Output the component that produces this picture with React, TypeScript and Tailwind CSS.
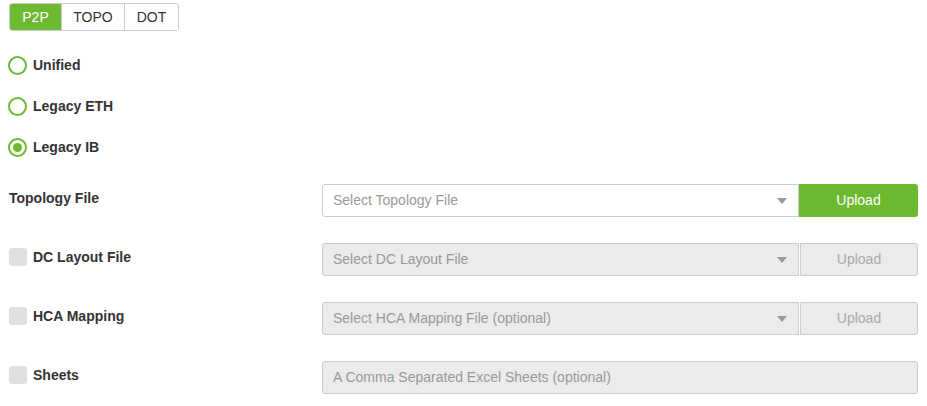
import { useState } from 'react';

type Mode = 'P2P' | 'TOPO' | 'DOT';
type Fabric = 'unified' | 'eth' | 'ib';

const MODES: Mode[] = ['P2P', 'TOPO', 'DOT'];

const FABRICS: { id: Fabric; label: string }[] = [
  { id: 'unified', label: 'Unified' },
  { id: 'eth', label: 'Legacy ETH' },
  { id: 'ib', label: 'Legacy IB' },
];

const Caret = () => (
  <svg width="10" height="6" viewBox="0 0 10 6" className="shrink-0">
    <path d="M0 0 L10 0 L5 6 Z" fill="#999" />
  </svg>
);

type FileRowProps = {
  label: string;
  placeholder: string;
  disabled?: boolean;
  withCheckbox?: boolean;
};

const FileRow = ({ label, placeholder, disabled, withCheckbox }: FileRowProps) => (
  <div className="flex h-[33px] items-start">
    <div className="flex w-[313px] items-center gap-[6px] pt-[5px] leading-[18px]">
      {withCheckbox && (
        <span className="-mt-px h-[18px] w-[18px] rounded-[3px] bg-[#e0e0e0]" />
      )}
      <span className="text-[14px] font-bold text-[#333]">{label}</span>
    </div>
    <div
      className={`flex h-[33px] w-[477px] items-center justify-between rounded-l-[3px] border border-[#ccc] pl-[10px] pr-[11px] text-[14px] ${
        disabled ? 'bg-[#ebebeb] text-[#999]' : 'bg-white text-[#999]'
      }`}
    >
      <span>{placeholder}</span>
      <Caret />
    </div>
    {disabled ? (
      <button className="ml-px flex h-[33px] w-[118px] items-center justify-center rounded-r-[3px] border border-[#ccc] bg-[#ebebeb] text-[14px] text-[#aaa]">
        Upload
      </button>
    ) : (
      <button className="flex h-[33px] w-[119px] items-center justify-center rounded-r-[3px] bg-[#6db92f] text-[14px] font-medium text-white">
        Upload
      </button>
    )}
  </div>
);

export default function App() {
  const [mode, setMode] = useState<Mode>('P2P');
  const [fabric, setFabric] = useState<Fabric>('ib');

  return (
    <div
      className="min-h-[406px] w-[927px] bg-white pl-[9px] pt-[3px]"
      style={{ fontFamily: '"Liberation Sans", Arial, sans-serif' }}
    >
      <div className="flex h-[28px] w-fit overflow-hidden rounded-[3px] border border-[#ccc]">
        {MODES.map((m, i) => (
          <button
            key={m}
            onClick={() => setMode(m)}
            className={`flex items-center justify-center text-[14px] ${
              i > 0 ? 'border-l border-[#ccc]' : ''
            } ${i === 0 ? 'w-[51px]' : i === 1 ? 'w-[63px]' : 'w-[54px]'} ${
              mode === m
                ? 'bg-[#6db92f] font-medium text-white'
                : 'bg-white text-[#333]'
            }`}
          >
            {m}
          </button>
        ))}
      </div>

      <div className="mt-[14px] flex flex-col">
        {FABRICS.map((f) => (
          <label
            key={f.id}
            onClick={() => setFabric(f.id)}
            className="-ml-px flex h-[41px] cursor-pointer items-center gap-[6px]"
          >
            <span className="flex h-[19px] w-[19px] items-center justify-center rounded-full border-2 border-[#6db92f] bg-white">
              {fabric === f.id && (
                <span className="h-[9px] w-[9px] rounded-full bg-[#6db92f]" />
              )}
            </span>
            <span className="text-[14px] font-bold text-[#333]">{f.label}</span>
          </label>
        ))}
      </div>

      <div className="mt-[16px] flex flex-col gap-[26px]">
        <FileRow label="Topology File" placeholder="Select Topology File" />
        <FileRow
          label="DC Layout File"
          placeholder="Select DC Layout File"
          disabled
          withCheckbox
        />
        <FileRow
          label="HCA Mapping"
          placeholder="Select HCA Mapping File (optional)"
          disabled
          withCheckbox
        />
        <div className="flex h-[33px] items-start">
          <div className="flex w-[313px] items-center gap-[6px] pt-[5px] leading-[18px]">
            <span className="-mt-px h-[18px] w-[18px] rounded-[3px] bg-[#e0e0e0]" />
            <span className="text-[14px] font-bold text-[#333]">Sheets</span>
          </div>
          <div className="flex h-[33px] w-[596px] items-center rounded-[3px] border border-[#ccc] bg-[#ebebeb] pl-[10px] text-[14px] text-[#999]">
            A Comma Separated Excel Sheets (optional)
          </div>
        </div>
      </div>
    </div>
  );
}
